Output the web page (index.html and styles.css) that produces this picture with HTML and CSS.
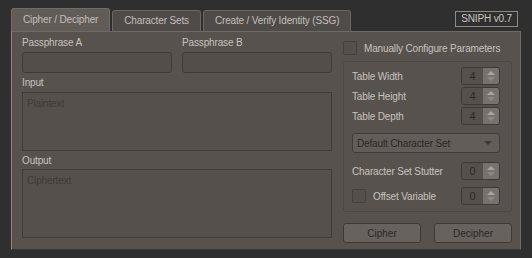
FILE: index.html
```html
<!DOCTYPE html>
<html lang="en">
  <head>
    <meta charset="UTF-8" />
    <title>SNIPH</title>
    <link rel="stylesheet" href="styles.css">
  </head>
  <body>
    <div class="window">
      <div class="tab-bar">
        <div class="tab active">Cipher / Decipher</div>
        <div class="tab">Character Sets</div>
        <div class="tab">Create / Verify Identity (SSG)</div>
        <div class="version">SNIPH v0.7</div>
      </div>
      <div class="panel">
        <div class="left-col">
          <div class="pass-row">
            <div class="field">
              <label>Passphrase A</label>
              <div class="line-input"></div>
            </div>
            <div class="field">
              <label>Passphrase B</label>
              <div class="line-input"></div>
            </div>
          </div>
          <label>Input</label>
          <div class="text-area input-area">Plaintext</div>
          <label>Output</label>
          <div class="text-area output-area">Ciphertext</div>
        </div>
        <div class="right-col">
          <div class="check-row manual">
            <span class="checkbox"></span>
            <span>Manually Configure Parameters</span>
          </div>
          <div class="group">
            <div class="param">
              <span>Table Width</span>
              <div class="spin"><span class="spin-value">4</span><span class="spin-arrows"><i class="up"></i><i class="down"></i></span></div>
            </div>
            <div class="param">
              <span>Table Height</span>
              <div class="spin"><span class="spin-value">4</span><span class="spin-arrows"><i class="up"></i><i class="down"></i></span></div>
            </div>
            <div class="param">
              <span>Table Depth</span>
              <div class="spin"><span class="spin-value">4</span><span class="spin-arrows"><i class="up"></i><i class="down"></i></span></div>
            </div>
            <div class="dropdown">
              <span>Default Character Set</span>
              <i class="drop-arrow"></i>
            </div>
            <div class="param stutter">
              <span>Character Set Stutter</span>
              <div class="spin"><span class="spin-value">0</span><span class="spin-arrows"><i class="up"></i><i class="down"></i></span></div>
            </div>
            <div class="param offset">
              <div class="check-row">
                <span class="checkbox"></span>
                <span>Offset Variable</span>
              </div>
              <div class="spin"><span class="spin-value">0</span><span class="spin-arrows"><i class="up"></i><i class="down"></i></span></div>
            </div>
          </div>
          <div class="buttons">
            <button class="btn">Cipher</button>
            <button class="btn">Decipher</button>
          </div>
        </div>
      </div>
    </div>
  </body>
</html>
```
FILE: styles.css
```css
body {
  margin: 0;
  background-color: #2f2f2f;
  font-family: "Liberation Sans", Arial, sans-serif;
  font-size: 10px;
  letter-spacing: -0.15px;
  color: #c6c2be;
}

.window {
  padding: 9px 0 0 11px;
  width: 510px;
}

.tab-bar {
  display: flex;
  align-items: flex-end;
  height: 22px;
}

.tab {
  height: 20px;
  line-height: 20px;
  padding: 0 11px;
  margin-right: 2px;
  background-color: #4f4b48;
  border: 1px solid #6c6763;
  border-bottom: none;
  border-radius: 3px 3px 0 0;
  color: #c3bfbb;
  white-space: nowrap;
}

.tab.active {
  height: 22px;
  line-height: 22px;
  background-color: #615c58;
  border-color: #716c68;
}

.version {
  margin-left: auto;
  margin-right: 3px;
  align-self: flex-start;
  margin-top: 2px;
  height: 14px;
  line-height: 14px;
  padding: 0 5px;
  border: 1px solid #8f8a86;
  color: #c9c5c1;
}

.panel {
  display: flex;
  gap: 11px;
  height: 205px;
  padding: 4px 8px 8px 10px;
  background-color: #57524e;
  border: 1px solid #6f6a66;
  border-left-color: #8a8581;
  border-bottom-color: #3b3835;
}

.left-col {
  width: 310px;
  display: flex;
  flex-direction: column;
}

.left-col label {
  display: block;
  height: 16px;
  line-height: 14px;
}

.pass-row {
  display: flex;
  gap: 10px;
  margin-bottom: 3px;
}

.field {
  width: 150px;
}

.line-input {
  height: 19px;
  border: 1px solid #3f3b38;
  border-radius: 3px;
  background-color: #534e4a;
}

.text-area {
  border: 1px solid #403c39;
  background-color: #55504c;
  padding: 5px 4px;
  color: #3e3a37;
  box-sizing: border-box;
  margin-bottom: 3px;
}

.input-area {
  height: 60px;
}

.output-area {
  height: 70px;
}

.right-col {
  width: 170px;
  padding-top: 5px;
}

.check-row {
  display: flex;
  align-items: center;
  gap: 7px;
  white-space: nowrap;
}

.checkbox {
  width: 12px;
  height: 12px;
  border: 1px solid #45413e;
  border-radius: 1px;
  background-color: #544f4b;
}

.group {
  margin-top: 6px;
  height: 143px;
  padding: 6px 11px 0 8px;
  border: 1px solid #4c4845;
  border-radius: 3px;
  display: flex;
  flex-direction: column;
}

.param {
  display: flex;
  justify-content: space-between;
  align-items: center;
  height: 16px;
  margin-bottom: 4px;
}

.spin {
  display: flex;
  height: 16px;
  border: 1px solid #3c3936;
  border-radius: 3px;
  overflow: hidden;
}

.spin-value {
  width: 21px;
  line-height: 16px;
  text-align: center;
  background-color: #55504c;
  color: #2d2a28;
  font-size: 11px;
}

.spin-arrows {
  width: 16px;
  background-color: #77726d;
  display: flex;
  flex-direction: column;
  align-items: center;
  justify-content: center;
  gap: 2px;
}

.spin-arrows i {
  width: 0;
  height: 0;
  border-left: 4px solid transparent;
  border-right: 4px solid transparent;
}

.spin-arrows .up {
  border-bottom: 4px solid #a8a39f;
}

.spin-arrows .down {
  border-top: 4px solid #8d8884;
}

.dropdown {
  display: flex;
  align-items: center;
  justify-content: space-between;
  height: 18px;
  margin-top: 5px;
  padding: 0 7px 0 4px;
  border: 1px solid #403c39;
  border-radius: 3px;
  background-color: #625d59;
  color: #2b2826;
}

.drop-arrow {
  width: 0;
  height: 0;
  border-left: 4px solid transparent;
  border-right: 4px solid transparent;
  border-top: 4px solid #3e3a37;
}

.stutter {
  margin-top: 9px;
  height: 18px;
}

.offset {
  margin-top: 4px;
}

.buttons {
  display: flex;
  justify-content: space-between;
  margin-top: 11px;
}

.btn {
  width: 78px;
  height: 20px;
  padding: 0;
  font-family: "Liberation Sans", Arial, sans-serif;
  font-size: 10px;
  color: #2b2826;
  background-color: #67625e;
  border: 1px solid #3c3936;
  border-radius: 3px;
}
```
